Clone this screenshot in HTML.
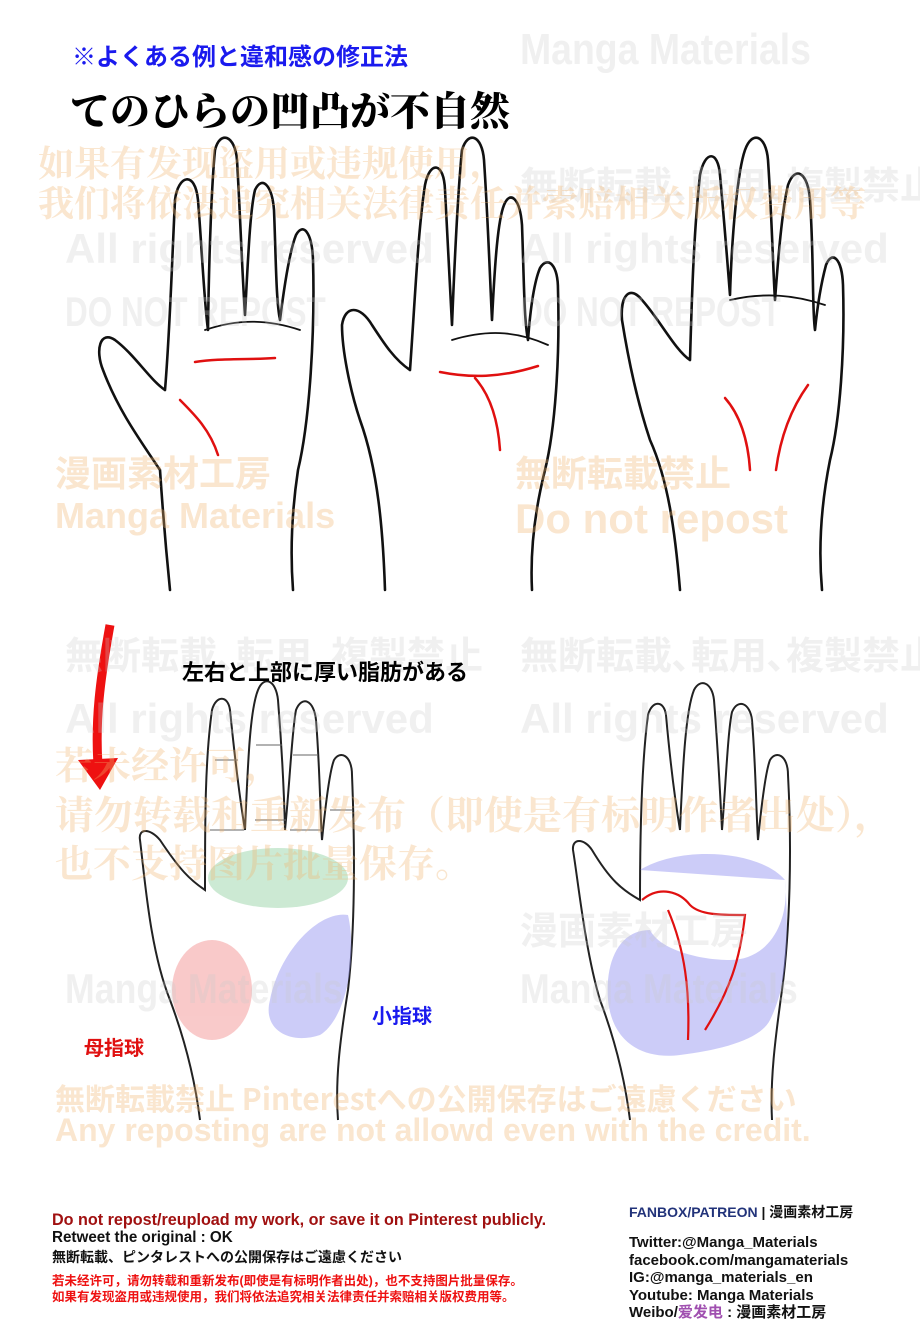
<!DOCTYPE html>
<html><head><meta charset="utf-8"><style>
body{margin:0;background:#fff;}
#c{position:relative;width:920px;height:1339px;overflow:hidden;background:#fff;font-family:"Liberation Sans","Noto Sans CJK JP",sans-serif;}
.t{position:absolute;white-space:nowrap;}
.wm{position:absolute;white-space:nowrap;color:rgba(200,200,200,0.28);font-weight:bold;}
.wo{position:absolute;white-space:nowrap;color:rgba(240,180,110,0.33);font-weight:bold;font-family:"Noto Serif CJK SC",serif;}
svg{position:absolute;left:0;top:0;}
</style></head><body><div id="c">
<svg width="920" height="1339" viewBox="0 0 920 1339">
<g fill="none" stroke="#111" stroke-width="2.6" stroke-linecap="round" stroke-linejoin="round">
<path d="M170 590 C165 540 162 500 160 470 C140 440 118 410 103 370 C95 350 100 330 115 340 C135 355 150 380 165 390 C170 330 172 260 175 200 C178 175 195 170 198 200 C202 250 204 300 208 330 C209 250 212 180 215 150 C220 130 235 135 237 160 C240 210 242 270 245 315 C248 260 250 210 255 190 C262 175 272 185 274 210 C276 260 276 300 280 320 C285 280 290 250 296 235 C303 222 312 232 313 260 C315 330 310 420 298 470 C292 510 290 550 293 590"/>
<path d="M205 330 C240 318 270 320 300 330" stroke-width="1.8"/>
<path d="M385 590 C383 530 378 470 360 420 C350 390 342 350 342 325 C345 305 360 305 372 325 C385 345 395 360 410 370 C415 300 418 230 425 185 C430 160 444 162 445 190 C448 240 450 290 452 325 C455 250 458 190 462 150 C468 130 482 135 484 160 C488 220 490 280 492 320 C495 260 498 220 504 205 C510 190 520 198 522 225 C524 280 524 320 528 340 C531 300 535 280 540 268 C548 255 558 265 558 290 C560 360 555 430 545 470 C535 510 530 550 532 590"/>
<path d="M452 340 C485 330 515 330 548 345" stroke-width="1.8"/>
<path d="M680 590 C675 530 668 480 650 440 C640 410 630 370 622 320 C620 295 630 285 642 300 C660 320 675 350 690 360 C692 290 694 230 700 175 C705 150 718 150 720 175 C725 230 728 270 730 295 C732 230 738 170 745 150 C752 130 766 135 768 160 C772 220 773 270 775 300 C778 260 782 210 788 185 C795 165 808 172 810 200 C814 260 812 310 815 330 C818 300 822 280 826 265 C832 250 842 258 843 285 C845 350 840 420 830 460 C822 500 818 545 822 590"/>
<path d="M730 300 C765 292 795 295 825 305" stroke-width="1.8"/>
</g>
<g fill="none" stroke="#e01010" stroke-width="2.5" stroke-linecap="round">
<path d="M195 362 C220 358 245 360 275 358"/>
<path d="M180 400 C195 415 210 430 218 455"/>
<path d="M440 372 C470 378 500 378 538 366"/>
<path d="M475 378 C490 395 498 420 500 450"/>
<path d="M725 398 C740 415 748 440 750 470"/>
<path d="M808 385 C790 410 780 440 776 470"/>
</g>
<path d="M110 625 C100 680 95 720 98 765" fill="none" stroke="#ee1111" stroke-width="9"/>
<path d="M78 760 L118 758 L100 790 Z" fill="#ee1111"/>
<g fill="none" stroke="#222" stroke-width="2">
<path d="M200 1120 C195 1080 185 1040 170 1000 C150 950 145 880 140 840 C138 828 150 828 160 840 C180 870 190 880 205 890 C205 820 205 760 212 710 C216 695 228 695 230 710 C235 760 240 800 245 830 C248 760 250 710 258 690 C264 675 276 680 278 700 C282 750 284 790 285 830 C290 780 292 730 296 710 C302 695 314 700 316 720 C320 770 320 810 322 840 C326 800 330 770 334 760 C340 750 352 755 352 775 C355 850 355 930 348 990 C340 1040 335 1080 338 1120"/>
<path d="M215 760 L238 760 M256 745 L282 745 M293 755 L318 755 M210 830 L244 830 M255 820 L286 820 M290 830 L322 830 M330 810 L352 810" stroke-width="1" stroke="#666"/>
<path d="M630 1120 C625 1080 615 1040 600 1000 C585 950 578 880 573 850 C572 838 584 838 592 850 C610 880 622 890 640 900 C640 820 642 760 648 715 C652 700 664 700 666 715 C670 760 675 800 680 830 C683 760 686 710 694 690 C700 678 712 682 714 700 C718 750 720 790 722 830 C726 780 728 730 732 712 C738 698 750 703 752 720 C756 770 756 810 758 840 C762 800 766 770 770 760 C776 750 788 755 788 775 C792 850 790 930 782 990 C775 1040 770 1080 772 1120"/>
</g>
<g opacity="0.45">
<ellipse cx="278" cy="878" rx="70" ry="30" fill="#8fd0a0"/>
<ellipse cx="212" cy="990" rx="40" ry="50" fill="#f28a8a"/>
<path d="M270 1000 C280 950 320 910 348 915 C358 960 345 1020 320 1035 C290 1045 262 1030 270 1000Z" fill="#8f8ff0"/>
<path d="M640 870 C680 845 760 850 785 880 C790 920 770 960 730 960 C700 960 660 950 650 930 C620 930 605 960 608 1000 C612 1040 640 1060 680 1055 C720 1050 760 1040 770 1020 C785 990 790 950 785 880" fill="#8f8ff0"/>
</g>
<g fill="none" stroke="#e01010" stroke-width="2.2">
<path d="M642 900 C660 885 680 892 690 905 C700 915 720 915 745 915 C740 960 730 990 705 1030"/>
<path d="M668 910 C685 950 690 990 688 1040"/>
</g>
</svg>

<div class="wm" style="left:520px;top:25px;font-size:44px;transform:scaleX(0.85);transform-origin:left;">Manga Materials</div>
<div class="wm" style="left:65px;top:225px;font-size:42px;">All rights reserved</div>
<div class="wm" style="left:520px;top:225px;font-size:42px;">All rights reserved</div>
<div class="wm" style="left:65px;top:288px;font-size:42px;transform:scaleX(0.75);transform-origin:left;">DO NOT REPOST</div>
<div class="wm" style="left:520px;top:288px;font-size:42px;transform:scaleX(0.75);transform-origin:left;">DO NOT REPOST</div>
<div class="wm" style="left:520px;top:155px;font-size:38px;">無断転載､転用､複製禁止</div>
<div class="wm" style="left:65px;top:625px;font-size:38px;">無断転載､転用､複製禁止</div>
<div class="wm" style="left:520px;top:625px;font-size:38px;">無断転載､転用､複製禁止</div>
<div class="wm" style="left:65px;top:695px;font-size:42px;">All rights reserved</div>
<div class="wm" style="left:520px;top:695px;font-size:42px;">All rights reserved</div>
<div class="wm" style="left:520px;top:900px;font-size:38px;">漫画素材工房</div>
<div class="wm" style="left:65px;top:965px;font-size:42px;transform:scaleX(0.85);transform-origin:left;">Manga Materials</div>
<div class="wm" style="left:520px;top:965px;font-size:42px;transform:scaleX(0.85);transform-origin:left;">Manga Materials</div>

<div class="wo" style="left:38px;top:136px;font-size:36px;">如果有发现盗用或违规使用，</div>
<div class="wo" style="left:38px;top:176px;font-size:36px;">我们将依法追究相关法律责任并索赔相关版权费用等</div>
<div class="wo" style="left:55px;top:445px;font-size:36px;font-family:'Noto Sans CJK JP',sans-serif;">漫画素材工房</div>
<div class="wo" style="left:55px;top:495px;font-size:36px;font-family:'Liberation Sans',sans-serif;">Manga Materials</div>
<div class="wo" style="left:515px;top:445px;font-size:36px;font-family:'Noto Sans CJK JP',sans-serif;">無断転載禁止</div>
<div class="wo" style="left:515px;top:495px;font-size:42px;font-family:'Liberation Sans',sans-serif;">Do not repost</div>
<div class="wo" style="left:55px;top:735px;font-size:38px;">若未经许可，</div>
<div class="wo" style="left:55px;top:785px;font-size:39px;">请勿转载和重新发布（即使是有标明作者出处），</div>
<div class="wo" style="left:55px;top:833px;font-size:38px;">也不支持图片批量保存。</div>
<div class="wo" style="left:55px;top:1075px;font-size:30px;font-family:'Noto Sans CJK JP',sans-serif;">無断転載禁止 Pinterestへの公開保存はご遠慮ください</div>
<div class="wo" style="left:55px;top:1112px;font-size:32px;font-family:'Liberation Sans',sans-serif;">Any reposting are not allowd even with the credit.</div>

<div class="t" style="left:72px;top:37px;font-size:24px;font-weight:bold;color:#1a1aee;">※よくある例と違和感の修正法</div>
<div class="t" style="left:70px;top:80px;font-size:40px;font-weight:900;color:#000;font-family:'Noto Serif CJK SC','Noto Sans CJK JP',serif;">てのひらの凹凸が不自然</div>
<div class="t" style="left:182px;top:655px;font-size:22px;font-weight:bold;color:#000;">左右と上部に厚い脂肪がある</div>
<div class="t" style="left:372px;top:1000px;font-size:20px;font-weight:bold;color:#1a1aee;">小指球</div>
<div class="t" style="left:84px;top:1032px;font-size:20px;font-weight:bold;color:#e01010;">母指球</div>

<div class="t" style="left:52px;top:1210px;font-size:17px;font-weight:bold;color:#a01010;transform:scaleX(0.95);transform-origin:left;">Do not repost/reupload my work, or save it on Pinterest publicly.</div>
<div class="t" style="left:52px;top:1229px;font-size:16px;font-weight:bold;color:#111;transform:scaleX(0.95);transform-origin:left;">Retweet the original : OK</div>
<div class="t" style="left:52px;top:1247px;font-size:14px;font-weight:bold;color:#111;">無断転載、ピンタレストへの公開保存はご遠慮ください</div>
<div class="t" style="left:52px;top:1270px;font-size:12.5px;font-weight:bold;color:#ee1111;">若未经许可，请勿转载和重新发布(即使是有标明作者出处)，也不支持图片批量保存。</div>
<div class="t" style="left:52px;top:1286px;font-size:12.5px;font-weight:bold;color:#ee1111;">如果有发现盗用或违规使用，我们将依法追究相关法律责任并索赔相关版权费用等。</div>
<div class="t" style="left:629px;top:1202px;font-size:14px;font-weight:bold;color:#22337a;">FANBOX/PATREON <span style="color:#111">| 漫画素材工房</span></div>
<div class="t" style="left:629px;top:1234px;font-size:15px;font-weight:bold;color:#111;line-height:17.5px;">Twitter:@Manga_Materials<br>facebook.com/mangamaterials<br>IG:@manga_materials_en<br>Youtube: Manga Materials<br>Weibo/<span style="color:#a050b0">爱发电</span> : 漫画素材工房</div>
</div></body></html>
